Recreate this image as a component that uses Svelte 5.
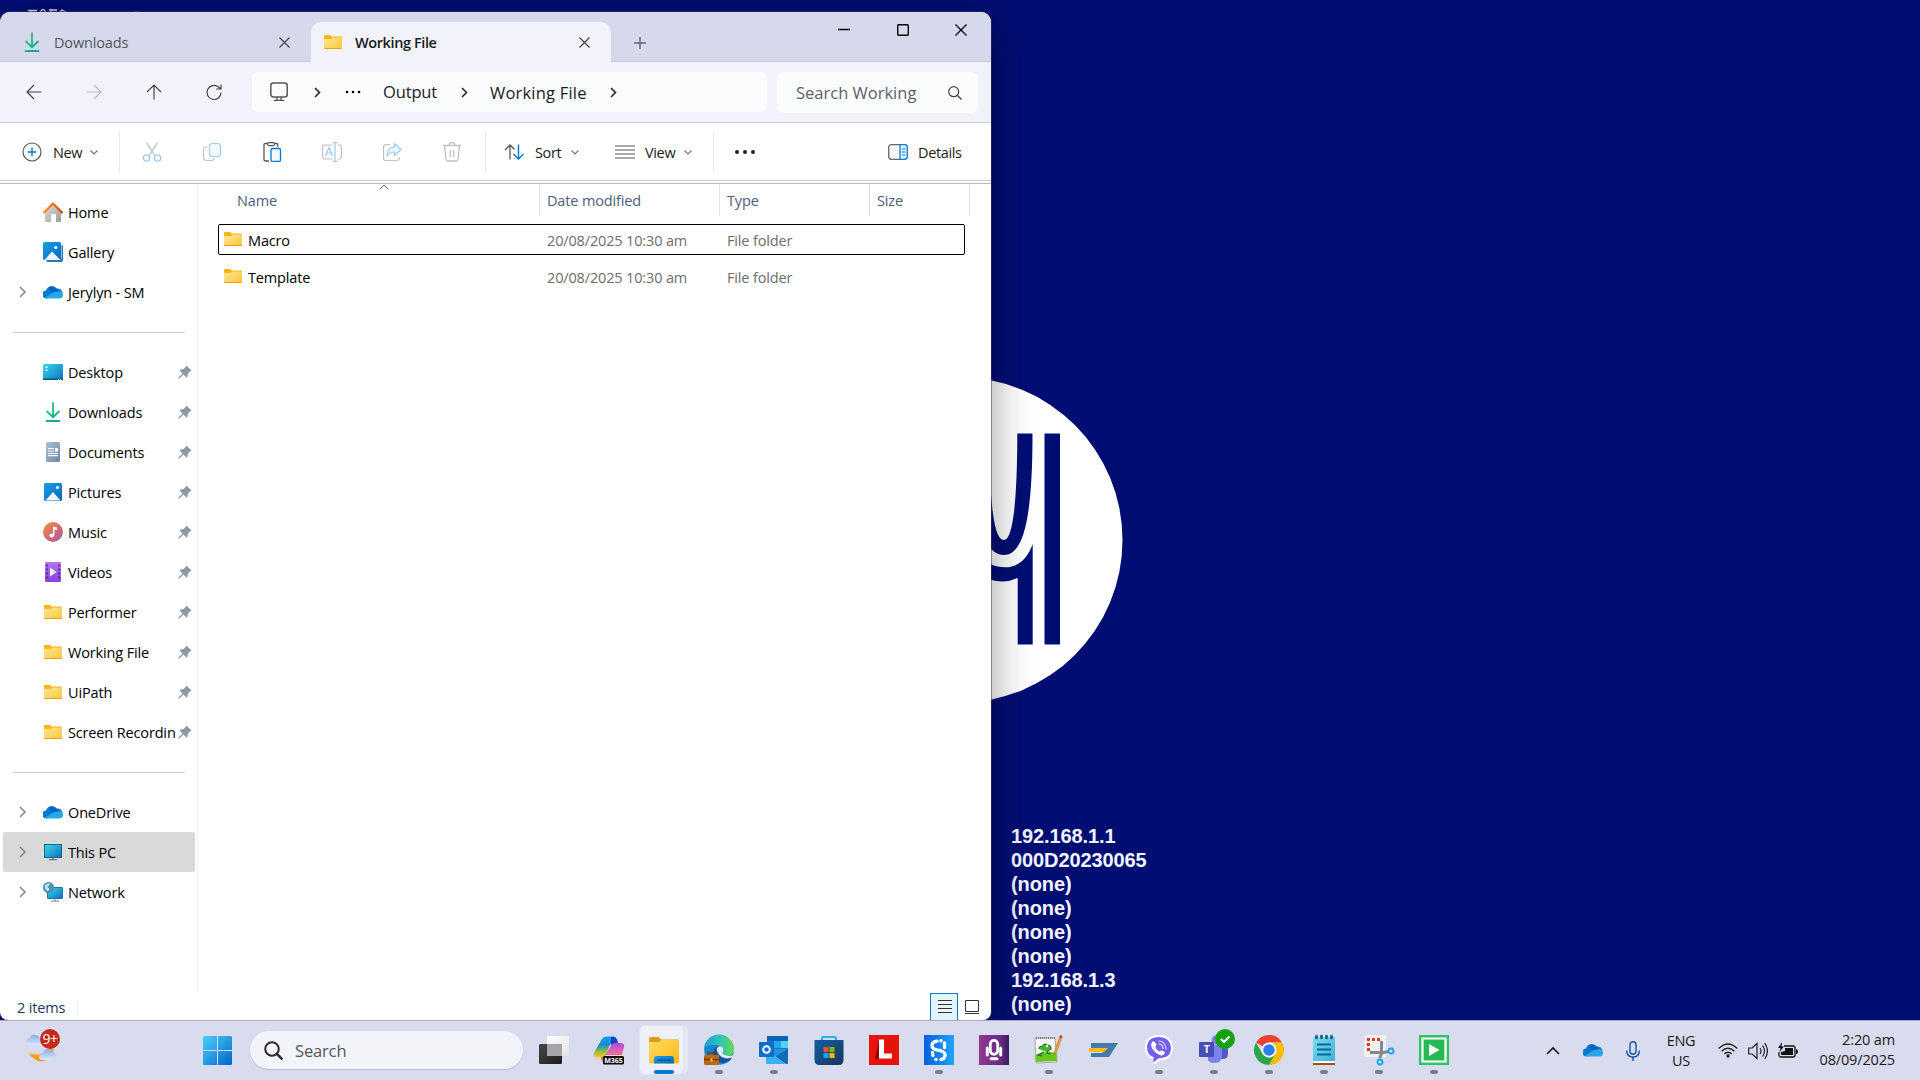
<script>
  const places = [
    { icon: 'home', label: 'Home' },
    { icon: 'gallery', label: 'Gallery' },
    { icon: 'cloud', label: 'Jerylyn - SM', expand: true },
    { divider: true },
    { icon: 'desktop', label: 'Desktop', pin: true },
    { icon: 'download', label: 'Downloads', pin: true },
    { icon: 'document', label: 'Documents', pin: true },
    { icon: 'picture', label: 'Pictures', pin: true },
    { icon: 'music', label: 'Music', pin: true },
    { icon: 'video', label: 'Videos', pin: true },
    { icon: 'folder', label: 'Performer', pin: true },
    { icon: 'folder', label: 'Working File', pin: true },
    { icon: 'folder', label: 'UiPath', pin: true },
    { icon: 'folder', label: 'Screen Recordin', pin: true },
    { divider: true },
    { icon: 'cloud', label: 'OneDrive', expand: true },
    { icon: 'pc', label: 'This PC', expand: true, selected: true },
    { icon: 'network', label: 'Network', expand: true }
  ];
  const files = [
    { name: 'Macro', date: '20/08/2025 10:30 am', type: 'File folder', focused: true },
    { name: 'Template', date: '20/08/2025 10:30 am', type: 'File folder' }
  ];
  const info = ['192.168.1.1', '000D20230065', '(none)', '(none)', '(none)', '(none)', '192.168.1.3', '(none)'];
  const apps = [
    { id: 'taskview' }, { id: 'copilot' }, { id: 'explorer', active: true }, { id: 'edge', open: true },
    { id: 'outlook', open: true }, { id: 'store' }, { id: 'lexmark' }, { id: 'sapp', open: true },
    { id: 'uapp' }, { id: 'npp', open: true }, { id: 'sap' }, { id: 'viber', open: true },
    { id: 'teams', open: true }, { id: 'chrome', open: true }, { id: 'notepad', open: true },
    { id: 'snip', open: true }, { id: 'camtasia', open: true }
  ];
</script>

{#snippet icon(name)}
  <svg class="ico" viewBox="0 0 20 20">
    {#if name === 'home'}
      <path d="M2 9.5 10 2l8 7.500V19q0 1-1 1h-4v-8H8v8H3q-1 0-1-1z" fill="url(#gHome)" />
      <path d="M1 10.500 10 1.500l9 9" fill="none" stroke="url(#gRoof)" stroke-width="2.300" stroke-linecap="round" stroke-linejoin="round" />
    {:else if name === 'gallery'}
      <path d="M3 17.500h14q1.500 0 1.500-1.500V3q1.500 0 1.500 1v14q0 2-2 2H5q-2 0-2-2.500z" fill="#2a76b8" />
      <rect x="0" y="0" width="18" height="18" rx="1.500" fill="url(#gBlue)" />
      <path d="m1.500 18 7.500-8.500 8.500 8.500z" fill="#eef6ff" /><circle cx="12.800" cy="5.500" r="1.600" fill="#fff" />
    {:else if name === 'cloud'}
      <path d="M4 16.500a4 4 0 0 1-1-8A6 6 0 0 1 13.500 6.500a5 5 0 0 1 6 5z" fill="#0078d4" />
      <path d="M5.500 6a6 6 0 0 1 9 1.500l1 1.500-5 2.500z" fill="#0364b8" />
      <path d="M2 15.500 11.500 9.700q2 1 4-.7 4.500.5 4.500 4 0 3.500-4 3.500H4.500q-1.500 0-2.500-1z" fill="#28a8ea" />
    {:else if name === 'desktop'}
      <rect x="0" y="2" width="20" height="16" rx="1" fill="url(#gScreen)" /><path d="M0 16.500h20v1q0 .5-1 .5H1q-1 0-1-.5z" fill="#074f80" />
      <path d="M2.500 4.500h2v1.500h-2zM2.500 7.500h2V9h-2zM15 17h1v1h-1zM17 17h1v1h-1z" fill="#e9ffff" />
    {:else if name === 'download'}
      <path d="M10 1v14M4 9.500l6 5.800 6-5.800M3.500 19h13" fill="none" stroke="url(#gDown)" stroke-width="1.900" stroke-linecap="round" />
    {:else if name === 'document'}
      <rect x="3" y="0" width="14" height="20" rx="1.500" fill="url(#gDoc)" />
      <path d="M5 6.500h6M5 9h6M5 11.500h10M5 13.700h10" stroke="#fff" stroke-width="1.200" /><path d="M12 6h3v3.500h-3z" fill="#fff" />
    {:else if name === 'picture'}
      <rect x="1" y="1" width="18" height="18" rx="1.500" fill="url(#gBlue)" />
      <path d="m2.500 18.500 7.500-8.500 7.500 8.500z" fill="#f2f8ff" /><circle cx="14.500" cy="5.500" r="1.600" fill="#fff" />
    {:else if name === 'music'}
      <circle cx="10" cy="10" r="10" fill="url(#gMusic)" /><ellipse cx="8.700" cy="13.500" rx="2.300" ry="2" fill="#fff" />
      <path d="M10 13.500V4.500l4 1v2.500l-2.600-.6v6" fill="#fff" />
    {:else if name === 'video'}
      <rect x="2" y="0" width="16" height="20" rx="1.300" fill="url(#gVideo)" />
      <path d="M4 2.500v16M16 2.500v16" stroke="#4b1e8c" stroke-width="1.600" stroke-dasharray="2 2" /><path d="m7 5.500 6.500 4.500L7 14.500z" fill="#f3e9ff" />
    {:else if name === 'folder'}
      <path d="M1 4q0-1 1-1h5q1 0 1.500 1.500H18q1 0 1 .5v3H1z" fill="#fbb50f" />
      <path d="M1 7h7l1.500-1.500H18q1 0 1 1V16q0 1-1 1H2q-1 0-1-1z" fill="url(#gFolder)" /><path d="M1.300 16.500h17.400" stroke="#e5a11a" />
    {:else if name === 'pc'}
      <rect x="1.500" y="2.500" width="17" height="13" fill="url(#gScreen)" stroke="#17688c" /><path d="M10 16v1.500M6 17.700h8" stroke="#65777f" stroke-width="1.200" />
    {:else if name === 'network'}
      <rect x="4.500" y="5.500" width="15" height="11" rx=".5" fill="url(#gScreen)" stroke="#17759c" /><path d="M12 17v1.500M8 19.200h8" stroke="#929ca4" stroke-width="1.200" />
      <circle cx="5.500" cy="5.500" r="5.500" fill="#4e8fae" /><path d="M1.500 4q3-3.500 5-2.500Q7.500 3 5.500 4t1 3Q5 10 3.500 8.500T1.500 4z" fill="#c3e0ea" />
    {/if}
  </svg>
{/snippet}

{#snippet line(d, w = 20, h = 20, cls = '')}
  <svg class="line {cls}" width={w} height={h} viewBox="0 0 {w} {h}"><path {d} /></svg>
{/snippet}

{#snippet appIcon(id)}
  <svg width="30" height="30" viewBox="0 0 30 30" overflow="visible">
    {#if id === 'taskview'}
      <rect x="0" y="9" width="23" height="20" rx="1" fill="url(#gDark)" /><rect x="8" y="1" width="22" height="20" rx="1" fill="url(#gLight)" />
      <path d="M8 9h15v12H9q-1 0-1-1z" fill="#a4a5a6" />
    {:else if id === 'copilot'}
      <path d="M8 4q1-2.500 4-2.500h7q3 0 4 3l1 4h-6q-2 0-3 3l-3 8q-1 3-4 3H3q-4 0-3-5z" fill="url(#gCopA)" />
      <path d="M17 2q4-1 6 3l1 3.500h-4q-2 0-3 3z" fill="#1740c5" />
      <path d="M17 11q1-3 4-3h5q5 0 4 4l-2 8H11z" fill="url(#gCopB)" /><path d="m7 22 5-1-2 7q-3-2-3-6z" fill="#ff6b35" />
      <rect x="9" y="21" width="21" height="8.500" rx="1.500" fill="#080808" /><text x="19.500" y="28" class="m365">M365</text>
    {:else if id === 'explorer'}
      <path d="M0 4q0-2 2-2h7q2 0 3 2.500h17q1 0 1 1V12H0z" fill="#df9d08" /><path d="M0 7h9q2 0 3-2h17q1 0 1 1v21q0 1.500-1.500 1.500h-27Q0 28.500 0 27z" fill="url(#gExp)" />
      <path d="M5 28.500V24q0-3 3-3h14q3 0 3 3v4.500z" fill="url(#gBlue)" /><path d="M9 25h12" stroke="#07539a" stroke-width="1.500" stroke-linecap="round" />
    {:else if id === 'edge'}
      <circle cx="15" cy="15" r="14.800" fill="#1683cf" />
      <path d="M0 14A15 15 0 0 1 30 15q0 6-7 6-7-1-5-4 1-7-6-7Q4 9 0 14z" fill="url(#gEdge)" />
      <path d="M12 12q-7 9 3 15 8 3 13-4-9 3-13-4-2-4 2-6-2-2-5-1z" fill="#16529b" />
      <path d="M13 13q2-3 5-1 2.500 3 0 6 3 4 11 2.500l-1 2q-8 2.500-13-3-3-4-2-6.500z" fill="#e6ecfb" />
      <rect x="0" y="20" width="15" height="10" rx="1" fill="#b96913" /><path d="M4 20v-2h7v2M0 24.500h15" stroke="#7a3909" stroke-width="1.300" fill="none" /><path d="M6.500 23.500h2v3h-2z" fill="#ffd34c" />
    {:else if id === 'outlook'}
      <rect x="8" y="1" width="21" height="18" rx="1" fill="#1479cc" /><path d="M15 6h7v7h-7z" fill="#25a6e8" /><path d="M22 6h7v7h-7z" fill="#55d2fc" /><path d="M8 1h21v5H8z" fill="#0d63b2" />
      <path d="M7 14h22v14q0 1-1 1H8q-1 0-1-1z" fill="#258fdd" /><path d="m29 14-15 9 15 6z" fill="#1169b8" /><path d="m7 14 20 15H8q-1 0-1-1z" fill="#38b1ee" />
      <rect x="0" y="7" width="15" height="15" rx="1" fill="#0b6fc9" /><circle cx="7.500" cy="14.500" r="3.300" fill="none" stroke="#fff" stroke-width="2" />
    {:else if id === 'store'}
      <path d="M8 6V3q0-1 1-1h12q1 0 1 1v3" fill="none" stroke="#21b4ee" stroke-width="2" /><path d="M.5 5h29v20q0 5-5 5h-19q-5 0-5-5z" fill="url(#gStore)" />
      <path d="M9.500 12h5v5h-5z" fill="#f25022" /><path d="M15.500 12h5v5h-5z" fill="#7fba00" /><path d="M9.500 18h5v5h-5z" fill="#00a4ef" /><path d="M15.500 18h5v5h-5z" fill="#ffb900" />
    {:else if id === 'lexmark'}
      <path d="M0 0h30v30H0z" fill="#e51309" /><path d="m10 5-4 19h4z" fill="#8d0804" /><path d="M10 4.500h5v14h8v5H10z" fill="#fff" />
    {:else if id === 'sapp'}
      <path d="M0 0h30v30H0z" fill="url(#gS)" />
      <path d="M13 6.200q-5 1-5 4.300 0 3.200 4.500 4.300 8 1 8.700 5-.3 4-4.200 4.700M20.500 8v4.500M8.500 17.500q0 1.500.5 3" fill="none" stroke="#fff" stroke-width="3.300" stroke-linecap="round" />
      <circle cx="17" cy="5.800" r="1.800" fill="#fff" /><circle cx="12" cy="24.500" r="1.800" fill="#fff" />
    {:else if id === 'uapp'}
      <path d="M0 0h30v30H0z" fill="url(#gU)" />
      <rect x="11.300" y="5.300" width="7.400" height="14" rx="3.700" fill="none" stroke="#fff" stroke-width="2.800" />
      <path d="M8.300 13v7M21.700 13v7M12 23.700h6" fill="none" stroke="#fff" stroke-width="3" stroke-linecap="round" />
    {:else if id === 'npp'}
      <path d="M1 3h20l2 24-21 1z" fill="#f7f8f5" stroke="#a8aaa5" /><path d="M2 3h19" stroke="#777" stroke-width="2" stroke-dasharray="1 1" /><path d="M1.500 20q10-5 21-2l.5 8-21 1z" fill="#68c71f" />
      <path d="M5 14q0-3 4-3 1-3 4-1 4 0 4 4-3 1-4 4l4 1M10 17l-6 3 4 1" fill="#43b92e" stroke="#206c27" stroke-width="1.200" /><circle cx="13" cy="11" r="1.200" fill="#fff" /><path d="m20 20 1-5 5-14 2 1-5 14z" fill="#f4ae33" stroke="#bd7424" stroke-width=".7" /><path d="m26 1 2 1" stroke="#bd3022" stroke-width="2" />
    {:else if id === 'sap'}
      <path d="M2 8h27L20 22H2v-4h11l5-5H2z" fill="#427bab" /><path d="M0 13h19l-4 4H0z" fill="#ffb91b" />
    {:else if id === 'viber'}
      <path d="M15 .5q13 0 13.500 12Q28.500 25 16 25l-6 4v-5Q1 22 1.500 12 2 0 15 .5z" fill="#fff" stroke="#fff" stroke-width="1" /><path d="M15 2q11 0 12 10.500Q27 23.500 15 23l-5.500 4.500V22Q3 20 3 12 3.500 2 15 2z" fill="#7360f2" />
      <path d="M8 7q2-2 3.500 1 2 2-.2 3.500 1 4 4.500 5 2-2 4 0 2 1 0 3-2 2-5 0Q8 16 7 10z" fill="#fff" /><path d="M15 6q6 0 7 8M15 9q3.500 0 4 4.500" fill="none" stroke="#ded8ff" stroke-width="1.200" stroke-linecap="round" />
    {:else if id === 'teams'}
      <path d="M15 10h14v9q0 5-5 5h-9z" fill="#5059c9" /><circle cx="17" cy="5" r="4.500" fill="#7b83eb" /><path d="M8 10h15v10q0 8-7.500 8T9 22z" fill="#7b83eb" />
      <rect x="0" y="7" width="15" height="15" rx="1" fill="#464eb8" /><text x="7.500" y="18.300" class="tt">T</text>
      <circle cx="26" cy="4" r="10" fill="#13a10e" /><path d="m22 4 3 3 5.500-5.500" fill="none" stroke="#fff" stroke-width="2.200" />
    {:else if id === 'chrome'}
      <path d="M15 15 2 7.500A15 15 0 0 1 28 7.500H15z" fill="#ea4335" /><path d="M15 15 8.500 18.700 2 7.500A15 15 0 0 0 15 30l6.500-11z" fill="#2ba24c" /><path d="m15 15 6.500 3.700L15 30A15 15 0 0 0 28 7.500H15z" fill="#fbbc05" />
      <circle cx="15" cy="15" r="7.500" fill="#fff" /><circle cx="15" cy="15" r="5.800" fill="#2b7de9" />
    {:else if id === 'notepad'}
      <path d="M4 2h22v24H4z" fill="url(#gPad)" /><path d="M4 26h22v3H4z" fill="#fff" /><path d="M4 29h22" stroke="#a45214" stroke-width="2" /><path d="M8 9.500h14M8 14.500h14M8 19.500h14" stroke="#086b96" stroke-width="1.800" />
      <path d="M7.500 1v2M12.500 1v2M17.500 1v2M22.500 1v2" stroke="#13617f" stroke-width="2.700" stroke-linecap="round" />
    {:else if id === 'snip'}
      <rect x="0" y="0" width="22" height="22" rx="2" fill="#f0f1f4" /><path d="M4.500 16V4.500H17" fill="none" stroke="#dd3d12" stroke-width="3" stroke-dasharray="3 2" /><path d="M17.500 6v13l-2 4M6 17.500h14l4-1" stroke="#85898e" stroke-width="3" fill="none" />
      <circle cx="27" cy="16" r="2.500" fill="none" stroke="#18a5ec" stroke-width="1.800" /><circle cx="16" cy="27" r="2.500" fill="none" stroke="#18a5ec" stroke-width="1.800" />
    {:else if id === 'camtasia'}
      <path d="M0 0h30v30H0z" fill="#31c463" /><path d="M3.500 3.500h23v23h-23z" fill="#28b957" stroke="#fff" stroke-width="2.200" /><path d="m10 9 10.500 6L10 21z" fill="#fff" />
    {/if}
  </svg>
{/snippet}

<svg class="defs" width="0" height="0">
  <defs>
    <linearGradient id="gHome" x2="1" y2="1"><stop stop-color="#e0e0e0" /><stop offset="1" stop-color="#9a9a9a" /></linearGradient>
    <linearGradient id="gRoof"><stop stop-color="#ff9b11" /><stop offset="1" stop-color="#cf4a18" /></linearGradient>
    <linearGradient id="gBlue" x2="1" y2="1"><stop stop-color="#1b9de6" /><stop offset="1" stop-color="#0668bd" /></linearGradient>
    <linearGradient id="gScreen" x2="1" y2="1"><stop stop-color="#35dce3" /><stop offset="1" stop-color="#0d6fc5" /></linearGradient>
    <linearGradient id="gDown" gradientUnits="userSpaceOnUse" x1="4" y1="1" x2="16" y2="19"><stop stop-color="#35cf8b" /><stop offset="1" stop-color="#0ba58c" /></linearGradient>
    <linearGradient id="gDoc" x2="1" y2="1"><stop stop-color="#afc0d5" /><stop offset="1" stop-color="#6987a8" /></linearGradient>
    <linearGradient id="gMusic" x2="1" y2="1"><stop stop-color="#f19145" /><stop offset=".6" stop-color="#cc6872" /><stop offset="1" stop-color="#9864bd" /></linearGradient>
    <linearGradient id="gVideo" x2="0" y2="1"><stop stop-color="#b675ef" /><stop offset="1" stop-color="#8740dc" /></linearGradient>
    <linearGradient id="gFolder" x2="1" y2="1"><stop stop-color="#ffe69a" /><stop offset="1" stop-color="#ffc638" /></linearGradient>
    <linearGradient id="gExp" x2="1" y2="1"><stop stop-color="#ffdb68" /><stop offset="1" stop-color="#fcb90e" /></linearGradient>
    <linearGradient id="gDark" x2="1" y2="1"><stop stop-color="#474747" /><stop offset="1" stop-color="#1e1e1e" /></linearGradient>
    <linearGradient id="gLight" x2="1" y2="1"><stop stop-color="#fff" /><stop offset="1" stop-color="#e2e2e3" /></linearGradient>
    <linearGradient id="gCopA" x2="0" y2="1"><stop stop-color="#18a0ef" /><stop offset=".4" stop-color="#158bce" /><stop offset=".7" stop-color="#8fbd46" /><stop offset="1" stop-color="#ffc62b" /></linearGradient>
    <linearGradient id="gCopB" x2="0" y2="1"><stop stop-color="#a94ce2" /><stop offset="1" stop-color="#ff6d8b" /></linearGradient>
    <linearGradient id="gEdge"><stop stop-color="#239cd7" /><stop offset=".5" stop-color="#2ac5bc" /><stop offset="1" stop-color="#67d94d" /></linearGradient>
    <linearGradient id="gStore" x2="1" y2="1"><stop stop-color="#155da0" /><stop offset="1" stop-color="#17375d" /></linearGradient>
    <linearGradient id="gS"><stop stop-color="#0562df" /><stop offset="1" stop-color="#20a4fa" /></linearGradient>
    <linearGradient id="gU"><stop stop-color="#91398f" /><stop offset=".7" stop-color="#692b87" /><stop offset="1" stop-color="#3b1b5d" /></linearGradient>
    <linearGradient id="gPad" x2="1" y2="1"><stop stop-color="#7bdcf0" /><stop offset="1" stop-color="#3cb2d7" /></linearGradient>
    <linearGradient id="gWin" gradientUnits="userSpaceOnUse" x1="0" y1="0" x2="29" y2="29"><stop stop-color="#4dd0fb" /><stop offset="1" stop-color="#0067cb" /></linearGradient>
    <linearGradient id="gPuff" x2="0" y2="1"><stop stop-color="#89ade8" /><stop offset="1" stop-color="#dce9ff" /></linearGradient>
  </defs>
</svg>

<main class="screen">
  <svg class="emblem" width="326" height="326" viewBox="797 377 326 326">
    <circle cx="960" cy="540" r="162.500" fill="#fff" />
    <path d="M1044.500 433.500h15.500v211h-15.500zM1017.300 433.500h15.200c0 85-9 121.500-28.500 121.500-6 0-10-3-14-7v-70c2 40 6 62 14 62 9 0 13.300-40 13.300-106.500zM1032.700 544v100.500h-15V578q-13 6-27.700 1.500V564c17 7 34 4 42.700-20z" fill="#000e74" />
  </svg>
  <svg class="specks" width="120" height="4" viewBox="0 0 120 4"><path d="M0 1.500h9M3 1v3M12 3l3-3 3 3M21 1h8M23 0v4M32 3l2-2 4 2M1 3.500h8M20 3.500h9" stroke="#d3d5e4" stroke-width="1.300" fill="none" /><path d="M106 3h5" stroke="#a69d38" /></svg>
  <div class="sysinfo">{#each info as row}<div>{row}</div>{/each}</div>

  <section class="window">
    <header class="tabs">
      <div class="tab idle">
        <span class="tab-icon">{@render icon('download')}</span>
        <span class="tab-title">Downloads</span>
        {@render line('M.500 .500l10 10M10.500 .500l-10 10', 11, 11, 'dark')}
      </div>
      <div class="tab current">
        <span class="tab-icon">{@render icon('folder')}</span>
        <span class="tab-title">Working File</span>
        {@render line('M.500 .500l10 10M10.500 .500l-10 10', 11, 11, 'dark')}
      </div>
      <span class="plus">{@render line('M6 0v12M0 6h12', 12, 12, 'dim')}</span>
      <div class="caption">
        {@render line('M0 5.500h12', 12, 12, 'black')}
        <svg width="12" height="12" viewBox="0 0 12 12"><rect x=".7" y=".7" width="10.600" height="10.600" rx="1" fill="none" stroke="#000" stroke-width="1.400" /></svg>
        {@render line('M.500 .500l11 11M11.500 .500l-11 11', 12, 12, 'black')}
      </div>
    </header>

    <nav class="navbar">
      <span class="navbtn">{@render line('M17.500 10H3M10 3l-7 7 7 7', 20, 20, 'dark')}</span>
      <span class="navbtn">{@render line('M2.500 10H17M10 3l7 7-7 7', 20, 20, 'pale')}</span>
      <span class="navbtn">{@render line('M10 17.500V3M3 10l7-7 7 7', 20, 20, 'dark')}</span>
      <span class="navbtn">{@render line('M17 10.500A7 7 0 1 1 14.500 5.100L17 7M17 2.500V7h-4.700', 20, 20, 'dark')}</span>
      <div class="address">
        <svg class="monitor" width="20" height="20" viewBox="0 0 20 20"><rect x="1.800" y="1" width="16.400" height="14" rx="2.500" fill="none" stroke="#555" stroke-width="1.500" /><path d="M8 15v3M12 15v3M5 18.300h10" stroke="#555" stroke-width="1.300" /></svg>
        {@render line('M1 1l4.500 4.500L1 10', 7, 11, 'crumb')}
        <svg class="dots" width="16" height="4" viewBox="0 0 16 4"><circle cx="2" cy="2" r="1.300" /><circle cx="8" cy="2" r="1.300" /><circle cx="14" cy="2" r="1.300" /></svg>
        <span class="crumb-output">Output</span>
        {@render line('M1 1l4.500 4.500L1 10', 7, 11, 'crumb')}
        <span class="crumb-working">Working File</span>
        {@render line('M1 1l4.500 4.500L1 10', 7, 11, 'crumb')}
      </div>
      <div class="finder">
        <span>Search Working</span>
        <svg width="14" height="14" viewBox="0 0 14 14"><circle cx="5.700" cy="5.700" r="5" fill="none" stroke="#444" stroke-width="1.200" /><path d="m9.300 9.300 4.200 4.200" stroke="#444" stroke-width="1.300" /></svg>
      </div>
    </nav>

    <div class="toolbar">
      <div class="cmd new">
        <svg width="20" height="20" viewBox="0 0 20 20"><circle cx="10" cy="10" r="9" fill="none" stroke="#555" stroke-width="1.200" /><path d="M10 5.800v8.400M5.800 10h8.400" stroke="#0078d4" stroke-width="1.400" /></svg>
        <span>New</span>{@render line('M.500 .500l3.500 3.500L7.500 .500', 8, 5, 'caret')}
      </div>
      <div class="tools">
        <svg width="20" height="20" viewBox="0 0 20 20"><path d="M4.500.5 13 14M15.500.5 7 14" fill="none" stroke="#bdbdbd" stroke-width="1.200" /><circle cx="4.500" cy="16" r="3.200" fill="none" stroke="#98c9f0" stroke-width="1.300" /><circle cx="15.500" cy="16" r="3.200" fill="none" stroke="#98c9f0" stroke-width="1.300" /></svg>
        <svg width="20" height="20" viewBox="0 0 20 20"><path d="M6 5H4Q1.500 5 1.500 8v7.500q0 3 3 3h5q2.500 0 3-2.500" fill="none" stroke="#c4c4c4" stroke-width="1.200" /><rect x="7.500" y="1.500" width="11" height="13" rx="2.500" fill="#f2f8fd" stroke="#a2cef1" stroke-width="1.200" /></svg>
        <svg width="20" height="20" viewBox="0 0 20 20"><path d="M7 19H3.500q-1.500 0-1.500-1.500v-15Q2 1.500 3.500 1.500h11q1.300 0 1.300 1.300V5" fill="none" stroke="#555" stroke-width="1.300" /><rect x="5.500" y=".6" width="7" height="3" rx="1.500" fill="#fff" stroke="#555" stroke-width="1.200" /><rect x="9" y="6.500" width="9.500" height="13" rx="1.500" fill="#f4faff" stroke="#0078d4" stroke-width="1.300" /></svg>
        <svg width="20" height="20" viewBox="0 0 20 20"><path d="M10.500 3H3Q.6 3 .6 5.500v8Q.6 17 3 17h7.500M15.500 3H17q2.400 0 2.400 2.500v8Q19.400 17 17 17h-1.500" fill="none" stroke="#c1c1c1" stroke-width="1.200" /><path d="M3.500 14 7 5.500 10.500 14M4.700 11h4.600M13 .7v18.600M10.500.7h5M10.500 19.300h5" fill="none" stroke="#9bcbf2" stroke-width="1.200" /></svg>
        <svg width="20" height="20" viewBox="0 0 20 20"><path d="M8 2.500H4.500Q1.500 2.500 1.500 5.500V16q0 2.500 2.500 2.500h11q2.500 0 2.500-3.500" fill="none" stroke="#c1c1c1" stroke-width="1.200" /><path d="M12.500 1.500 19 7.500l-6.500 6v-3.500Q8 10 5 14q0-8.500 7.500-9z" fill="#eef7fe" stroke="#9bcbf2" stroke-width="1.200" stroke-linejoin="round" /></svg>
        <svg width="20" height="20" viewBox="0 0 20 20"><path d="M1 3.500h18M7 3.500q0-3 3-3t3 3M2.500 3.500 4 17q.2 2 2 2h8q1.800 0 2-2l1.500-13.500M8.300 8v7M11.700 8v7" fill="none" stroke="#c1c1c1" stroke-width="1.300" /></svg>
      </div>
      <div class="cmd sort">
        <svg width="20" height="16" viewBox="0 0 20 16"><path d="M6 15.500V1M1 6l5-5 4.500 4.500" fill="none" stroke="#555" stroke-width="1.300" /><path d="M14.500.5V15M9.500 10l5 5 5-5" fill="none" stroke="#0078d4" stroke-width="1.400" /></svg>
        <span>Sort</span>{@render line('M.500 .500l3.500 3.500L7.500 .500', 8, 5, 'caret')}
      </div>
      <div class="cmd view">
        <svg width="20" height="14" viewBox="0 0 20 14"><path d="M0 1h20M0 5h20M0 9h20M0 13h20" stroke="#555" stroke-width="1.200" /></svg>
        <span>View</span>{@render line('M.500 .500l3.500 3.500L7.500 .500', 8, 5, 'caret')}
      </div>
      <svg class="more" width="22" height="6" viewBox="0 0 22 6"><circle cx="3" cy="3" r="2" /><circle cx="11" cy="3" r="2" /><circle cx="19" cy="3" r="2" /></svg>
      <div class="cmd details">
        <svg width="20" height="16" viewBox="0 0 20 16"><path d="M12 .7H3.500Q.7.700.7 3.500v9q0 2.800 2.800 2.800H12" fill="#f7f7f7" stroke="#666" stroke-width="1.300" /><path d="M12 .7h4.500q2.800 0 2.800 2.800v9q0 2.800-2.800 2.800H12z" fill="#e9f5fe" stroke="#0078d4" stroke-width="1.300" /><path d="M14 5h3.500M14 8h3.500M14 11h3.500" stroke="#0078d4" stroke-width="1.200" /></svg>
        <span>Details</span>
      </div>
    </div>

    <div class="content">
      <aside>
        {#each places as p}
          {#if p.divider}
            <div class="divider"><hr /></div>
          {:else}
            <div class="place" class:selected={p.selected}>
              <span class="expander">{#if p.expand}{@render line('M1 1l5 5-5 5', 8, 12, 'expand')}{/if}</span>
              {@render icon(p.icon)}
              <span class="label">{p.label}</span>
              {#if p.pin}
                <svg class="pin" width="14" height="14" viewBox="0 0 14 14"><path d="M8.500.5 13.500 5.500 12 6.500 9.800 9 9.500 12 8.500 12.500 5.500 9.500 1.500 13.500.5 13.500.5 12.500 4.500 8.500 1.500 5.500 2.200 4.500 5.300 4.200 7.500 2z" fill="#8e9aa3" /></svg>
              {/if}
            </div>
          {/if}
        {/each}
      </aside>
      <div class="listing">
        <div class="heads">
          <span class="h-name">Name</span><span>Date modified</span><span>Type</span><span>Size</span>
          <svg class="sorted" width="10" height="6" viewBox="0 0 10 6"><path d="M.7 5.300 5 1l4.300 4.300" fill="none" stroke="#666" /></svg>
        </div>
        {#each files as f}
          <div class="file" class:focused={f.focused}>
            {@render icon('folder')}
            <span class="fname">{f.name}</span><span class="meta date">{f.date}</span><span class="meta">{f.type}</span>
          </div>
        {/each}
      </div>
    </div>

    <footer>
      <span class="count">2 items</span>
      <span class="mode on"><svg width="14" height="14" viewBox="0 0 14 14"><path d="M0 .5h14M0 4.500h14M0 8.500h14M0 12.500h14" stroke="#333" /></svg></span>
      <span class="mode"><svg width="14" height="14" viewBox="0 0 14 14"><path d="M.5.5h13v11H.5zM0 13.500h14" fill="none" stroke="#333" /></svg></span>
    </footer>
  </section>

  <div class="taskbar">
    <div class="weather">
      <svg width="36" height="36" viewBox="0 0 36 36"><path d="M3 25q8 3 14 0 7-3 8-9 6 9-2 15-12 7-20-6z" fill="#f6a022" /><path d="M4 17q-4 0-4-3t4-4q1-4 5-3 4 0 5 4 5 1 2 6z" fill="url(#gPuff)" /><path d="M16 32q-3 0-3-3t4-4q1-4 5-4t5 4q4 0 3.500 4 0 3-4 3z" fill="url(#gPuff)" /><circle cx="24" cy="11" r="10" fill="#c42b1c" /><text x="24" y="16.300" class="badge">9+</text></svg>
    </div>
    <svg class="start" width="29" height="29" viewBox="0 0 29 29"><path d="M1 0h13v14H0V1q0-1 1-1zM15 0h13q1 0 1 1v13H15zM0 15h14v14H1q-1 0-1-1zM15 15h14v13q0 1-1 1H15z" fill="url(#gWin)" /></svg>
    <div class="search">
      <svg width="19" height="19" viewBox="0 0 19 19"><circle cx="8" cy="8" r="6.800" fill="none" stroke="#2b2b2b" stroke-width="2" /><path d="m12.800 12.800 4.800 4.800" stroke="#2b2b2b" stroke-width="2.500" stroke-linecap="round" /></svg>
      <span>Search</span>
    </div>
    <div class="apps">
      {#each apps as a}
        <div class="app" class:active={a.active} class:open={a.open}>{@render appIcon(a.id)}</div>
      {/each}
    </div>
    <div class="tray">
      {@render line('M1 8l6-6 6 6', 14, 9, 'up')}
      <span class="tray-cloud">{@render icon('cloud')}</span>
      <svg class="mic" width="14" height="20" viewBox="0 0 14 20"><rect x="4" y=".7" width="6" height="12.500" rx="3" fill="none" stroke="#1852a4" stroke-width="1.400" /><path d="M.7 9.500q0 6.500 6.300 6.500t6.300-6.500M7 16v4" fill="none" stroke="#1852a4" stroke-width="1.400" /></svg>
      <div class="lang"><span>ENG</span><span>US</span></div>
      <svg class="wifi" width="20" height="15" viewBox="0 0 20 15"><path d="M.7 5.500q9.300-9 18.600 0M3.500 8.300q6.500-6.200 13 0M6.300 11q3.700-3.500 7.400 0" fill="none" stroke="#222" stroke-width="1.300" /><circle cx="10" cy="13" r="1.700" fill="#222" /></svg>
      <svg class="sound" width="20" height="18" viewBox="0 0 20 18"><path d="M.7 6h3.500L9 1.500v15L4.200 12H.7zM12 6q2 3 0 6M14.500 3.500q4 5.500 0 11M16.700 1q5.500 8 0 16" fill="none" stroke="#222" stroke-width="1.200" /></svg>
      <svg class="battery" width="20" height="17" viewBox="0 0 20 17"><path d="M6 4h9q2 0 2 2v7q0 2-2 2H3q-2 0-2-2v-3" fill="none" stroke="#111" stroke-width="1.300" /><path d="M7 6h8v7H3v-3l4-1zM18 7q2 0 2 2.500T18 12zM4 0 0 6h2.500L1.500 10 6 4.500H3.500z" fill="#111" /></svg>
      <div class="clock"><span>2:20 am</span><span>08/09/2025</span></div>
    </div>
  </div>
</main>

<style>
  :global(body) { margin: 0; overflow: hidden; }
  * { box-sizing: border-box; }
  svg { display: block; flex: none; }
  .defs { position: absolute; }
  .screen { position: relative; width: 1920px; height: 1080px; overflow: hidden; background: #000e74; font: 14.500px/20px 'Open Sans', 'Noto Sans', sans-serif; letter-spacing: -0.15px; color: #1b1b1b; display: flex; flex-direction: column; padding-top: 12px; white-space: nowrap; }
  .emblem { position: absolute; left: 797px; top: 377px; }
  .specks { position: absolute; left: 28px; top: 9px; }
  .sysinfo { position: absolute; left: 1011px; top: 824px; font: bold 20px/24px 'Liberation Sans', Arial, sans-serif; letter-spacing: -0.1px; color: #f3f4ff; }
  .window { position: relative; width: 991px; height: 1008px; background: #fff; border-radius: 10px 10px 8px 8px; overflow: hidden; display: flex; flex-direction: column; box-shadow: 0 0 0 1px rgba(50, 55, 100, .5), 2px 8px 40px rgba(0, 0, 0, .38); }
  .ico { width: 20px; height: 20px; }
  .line path { fill: none; stroke: #333; stroke-width: 1.200; }
  .dark path { stroke: #444; }
  .black path { stroke: #000; stroke-width: 1.300; }
  .pale path { stroke: #b9bac0; }
  .dim path { stroke: #666873; stroke-width: 1.500; }
  .caret path { stroke: #777; }
  .crumb path { stroke: #222; stroke-width: 1.500; }
  .expand path { stroke: #858585; stroke-width: 1.500; }
  .up path { stroke: #1b1b1b; stroke-width: 1.700; }

  .tabs { height: 50px; flex: none; display: flex; background: #d6d8ec; box-shadow: inset 0 -1px #c8cae2; }
  .tab { display: flex; align-items: center; height: 40px; margin-top: 10px; }
  .idle { width: 311px; padding: 0 21px 0 22px; color: #54565f; }
  .current { width: 300px; padding: 0 21px 0 12px; background: #f2f3fa; border-radius: 10px 10px 0 0; font-weight: 600; letter-spacing: -0.4px; }
  .tab-icon { margin-right: 12px; }
  .tab-title { flex: 1; padding-top: 2px; }
  .plus { margin: 25px 0 0 23px; }
  .caption { margin: 12px 24px 0 auto; display: flex; gap: 46.500px; }

  .navbar { height: 61px; flex: none; display: flex; align-items: flex-start; padding: 10px 0 0 4px; background: #f2f3fa; border-bottom: 1px solid #c7c8df; font-size: 16.500px; letter-spacing: -0.15px; }
  .navbtn { width: 60px; height: 40px; display: grid; place-items: center; }
  .address { margin-left: 8px; width: 515px; height: 40px; padding-left: 17px; border-radius: 6px; background: #fbfcfe; display: flex; align-items: center; }
  .monitor { margin-right: 25px; }
  .dots { margin: 0 22px 0 24px; }
  .crumb-output { width: 78px; }
  .crumb-working { width: 120px; margin-left: 22px; padding-top: 1px; letter-spacing: .2px; }
  .finder { margin-left: 10px; width: 201px; height: 41px; padding: 0 16px 0 19px; border-radius: 6px; background: #fbfcfe; display: flex; align-items: center; justify-content: space-between; color: #5f6066; }
  .finder span { letter-spacing: 0; }

  .toolbar { height: 58px; flex: none; display: flex; align-items: center; padding-top: 1px; border-bottom: 1px solid #c7c8df; background: #fff; }
  .cmd { height: 40px; display: flex; align-items: center; }
  .cmd span { padding-top: 1px; letter-spacing: -0.35px; }
  .new { width: 120px; padding-left: 22px; border-right: 1px solid #e8e8e8; }
  .new span { width: 37px; margin-left: 11px; }
  .tools { width: 366px; height: 40px; padding-left: 2px; display: grid; grid-template-columns: repeat(6, 60px); justify-items: center; align-items: center; border-right: 1px solid #e8e8e8; }
  .sort { width: 110px; padding-left: 18px; }
  .sort span { width: 36px; margin-left: 11px; }
  .view { width: 118px; padding-left: 19px; border-right: 1px solid #e8e8e8; }
  .view span { width: 39px; margin-left: 10px; }
  .more { margin-left: 20px; fill: #222; }
  .details { margin-left: auto; width: 103px; gap: 10px; }

  .content { flex: 1; min-height: 0; margin-top: 2px; border-top: 1px solid #bcbcbc; display: flex; }
  aside { width: 198px; padding: 8px 2px 0 3px; border-right: 1px solid #f3f3f3; color: #000; }
  .place { height: 40px; display: flex; align-items: center; padding: 0 3px 0 16px; border-radius: 2px; }
  .selected { background: #d9d9d9; }
  .expander { width: 24px; }
  .label { margin-left: 5px; flex: 1; width: 100px; padding-top: 1px; }
  .divider { height: 40px; display: flex; align-items: center; padding: 0 10px; }
  hr { flex: 1; height: 1px; border: 0; margin: 0; background: #d2d2d2; }
  .listing { flex: 1; }
  .heads { position: relative; height: 32px; display: grid; grid-template-columns: 342px 180px 150px 100px; color: #4c607a; }
  .heads span { border-right: 1px solid #e2e2e2; padding: 7px 0 0 7px; }
  .heads .h-name { padding-left: 39px; }
  .sorted { position: absolute; left: 181px; top: 0; }
  .file { height: 31px; margin: 8px 0 6px 20px; width: 747px; padding-left: 4px; border: 1px solid transparent; border-radius: 2px; display: flex; align-items: center; }
  .file .ico { margin-top: -1px; }
  .file span { padding-top: 2px; }
  .focused { border-color: #000; }
  .file + .file { margin-top: 0; }
  .fname { width: 299px; margin-left: 5px; color: #000; }
  .meta { color: #6d6d6d; }
  .date { width: 180px; }
  footer { height: 28px; flex: none; display: flex; padding-right: 5px; }
  .count { width: 78px; height: 13px; margin: 9px auto 0 0; padding-left: 17px; line-height: 13px; border-right: 1px solid #f1f1f1; color: #1e3a5f; }
  .mode { width: 28px; height: 28px; margin-top: 1px; display: grid; place-items: center; }
  .on { padding-left: 1px; border: 1px solid #0078d4; background: #e5f3fb; }

  .taskbar { position: relative; height: 60px; flex: none; background: #d9dbee; border-top: 1px solid #adaeba; display: flex; align-items: center; }
  .weather { width: 177px; margin: -10px 0 0 26px; }
  .search { width: 273px; height: 38px; margin: -1px 0 0 18px; padding-left: 14px; border-radius: 19px; background: #f3f4fa; box-shadow: 0 1px 1px #b9bbd0; display: flex; align-items: center; gap: 12px; font-size: 16.500px; letter-spacing: -0.15px; color: #55565c; }
  .search span { padding-top: 2px; }
  .apps { margin-left: 3px; display: flex; height: 59px; }
  .app { position: relative; width: 55px; padding: 14px 0 0 13px; }
  .app svg { position: relative; }
  .active::before { content: ''; position: absolute; left: 4px; top: 5px; width: 43px; height: 48px; border-radius: 5px; background: #eef0f9; box-shadow: 0 0 0 1px #e3e4f2, 5px 0 0 #e6e7f5; }
  .active::after, .open::after { content: ''; position: absolute; top: 49px; left: 24px; width: 8px; height: 4px; border-radius: 2px; background: #7b7d88; }
  .active::after { left: 18px; width: 20px; background: #0078d4; }
  .m365 { font: bold 7px 'Open Sans', sans-serif; fill: #fff; text-anchor: middle; letter-spacing: 0; }
  .tt { font: bold 11px 'Open Sans', sans-serif; fill: #fff; text-anchor: middle; }
  .badge { font: 14px 'Open Sans', sans-serif; fill: #fff; text-anchor: middle; letter-spacing: -.5px; }
  .tray { margin-left: auto; padding-right: 25px; display: flex; align-items: center; }
  .tray-cloud { margin: -2px 23px 0; }
  .lang { width: 40px; margin: 0 17px 0 21px; display: flex; flex-direction: column; align-items: center; letter-spacing: -0.35px; }
  .sound { margin: 0 10px; }
  .clock { width: 97px; margin-top: -1px; display: flex; flex-direction: column; align-items: flex-end; }
</style>
